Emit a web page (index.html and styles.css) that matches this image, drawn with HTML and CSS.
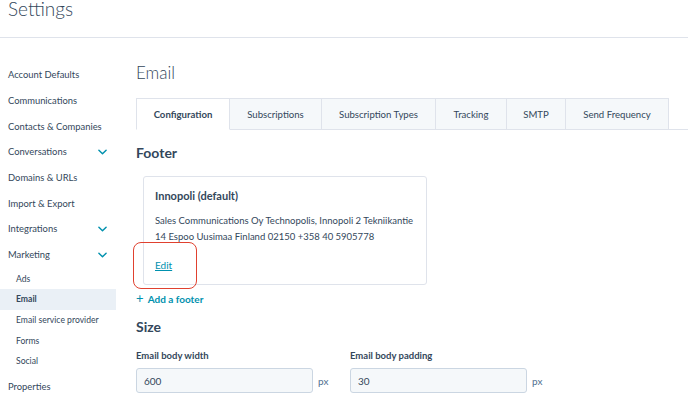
FILE: index.html
```html
<!DOCTYPE html>
<html lang="en">
<head>
  <meta charset="UTF-8">
  <title>Settings - Email</title>
  <link rel="stylesheet" href="styles.css">
</head>
<body>

  <header class="page-header">
    <h1 class="page-title">Settings</h1>
  </header>

  <div class="layout">

    <nav class="sidebar">
      <a class="nav-item">Account Defaults</a>
      <a class="nav-item">Communications</a>
      <a class="nav-item">Contacts &amp; Companies</a>
      <a class="nav-item">Conversations <svg class="chevron" viewBox="0 0 10 6"><path d="M1 1l4 4 4-4"/></svg></a>
      <a class="nav-item">Domains &amp; URLs</a>
      <a class="nav-item">Import &amp; Export</a>
      <a class="nav-item">Integrations <svg class="chevron" viewBox="0 0 10 6"><path d="M1 1l4 4 4-4"/></svg></a>
      <a class="nav-item">Marketing <svg class="chevron" viewBox="0 0 10 6"><path d="M1 1l4 4 4-4"/></svg></a>
      <div class="subnav">
        <a class="sub-item">Ads</a>
        <a class="sub-item is-active">Email</a>
        <a class="sub-item">Email service provider</a>
        <a class="sub-item">Forms</a>
        <a class="sub-item">Social</a>
      </div>
      <a class="nav-item">Properties</a>
    </nav>

    <main class="content">
      <h2 class="content-title">Email</h2>

      <div class="tabs">
        <button type="button" class="tab is-active">Configuration</button>
        <button type="button" class="tab">Subscriptions</button>
        <button type="button" class="tab">Subscription Types</button>
        <button type="button" class="tab">Tracking</button>
        <button type="button" class="tab">SMTP</button>
        <button type="button" class="tab">Send Frequency</button>
      </div>

      <h3 class="section-title">Footer</h3>

      <div class="footer-card">
        <div class="footer-name">Innopoli (default)</div>
        <p class="footer-address">Sales Communications Oy Technopolis, Innopoli 2 Tekniikantie<br>14 Espoo Uusimaa Finland 02150 +358 40 5905778</p>
        <a class="edit-link">Edit</a>
        <span class="highlight"></span>
      </div>

      <a class="add-link"><span class="plus">+</span> Add a footer</a>

      <h3 class="section-title is-size">Size</h3>

      <div class="fields">
        <div class="field">
          <label class="field-label">Email body width</label>
          <div class="field-row">
            <input class="field-input" type="text" value="600">
            <span class="unit">px</span>
          </div>
        </div>
        <div class="field">
          <label class="field-label">Email body padding</label>
          <div class="field-row">
            <input class="field-input" type="text" value="30">
            <span class="unit">px</span>
          </div>
        </div>
      </div>
    </main>

  </div>

</body>
</html>
```

FILE: styles.css
```css
html, body {
  height: 100%;
}
body {
  margin: 0;
  font-family: "Lato", "Noto Sans", sans-serif;
  color: #33475b;
  background: #fff;
  overflow: hidden;
}

.page-header {
  height: 37px;
  border-bottom: 1px solid #dfe3eb;
}
.page-title {
  margin: 0;
  padding-left: 8px;
  font-size: 19px;
  font-weight: 300;
  line-height: 18px;
  color: #33475b;
}

.layout {
  display: flex;
}

/* sidebar */
.sidebar {
  width: 116px;
  flex: none;
  padding-top: 24px;
}
.nav-item {
  display: flex;
  align-items: center;
  justify-content: space-between;
  height: 25.7px;
  padding: 0 9px 0 8px;
  font-size: 9.4px;
  white-space: nowrap;
  color: #33475b;
}
.chevron {
  width: 9px;
  height: 6px;
  fill: none;
  stroke: #0091ae;
  stroke-width: 1.6;
  stroke-linecap: round;
  stroke-linejoin: round;
}
.subnav {
  padding-top: 1px;
  margin-bottom: 2px;
}
.sub-item {
  display: flex;
  align-items: center;
  height: 20.6px;
  padding-left: 16px;
  font-size: 8.6px;
  white-space: nowrap;
  color: #33475b;
}
.sub-item.is-active {
  background: #eaf0f6;
  font-weight: 700;
}

/* content */
.content {
  flex: 1;
  padding-left: 20px;
}
.content-title {
  margin: 25px 0 0;
  font-size: 17px;
  font-weight: 300;
  line-height: 20px;
}
.tabs {
  display: flex;
  margin-top: 15px;
  border-bottom: 1px solid #dfe3eb;
}
.tab {
  height: 32px;
  margin-bottom: -1px;
  padding: 0;
  border: 1px solid #dfe3eb;
  border-left: 0;
  background: #f5f8fa;
  font-family: inherit;
  font-size: 9.6px;
  white-space: nowrap;
  color: #33475b;
}
.tab:first-child {
  border-left: 1px solid #dfe3eb;
}
.tab.is-active {
  background: #fff;
  border-bottom-color: #fff;
  font-weight: 700;
}
.tab:nth-child(1) { width: 94px; }
.tab:nth-child(2) { width: 92px; }
.tab:nth-child(3) { width: 114px; }
.tab:nth-child(4) { width: 71px; }
.tab:nth-child(5) { width: 59px; }
.tab:nth-child(6) { width: 103px; }

.section-title {
  margin: 14px 0 0;
  font-size: 14px;
  font-weight: 700;
  line-height: 18px;
}
.section-title.is-size {
  margin-top: 11px;
}

.footer-card {
  position: relative;
  width: 260px;
  margin: 14px 0 0 7px;
  padding: 11px 11px 11px;
  border: 1px solid #dfe3eb;
  border-radius: 3px;
}
.footer-name {
  font-size: 11px;
  font-weight: 700;
  line-height: 16px;
}
.footer-address {
  margin: 9px 0 0;
  font-size: 9.5px;
  line-height: 16px;
  white-space: nowrap;
}
.edit-link {
  display: inline-block;
  margin-top: 12px;
  font-size: 10px;
  line-height: 16px;
  color: #0091ae;
  text-decoration: underline;
}
.highlight {
  position: absolute;
  left: -11px;
  top: 65px;
  width: 62px;
  height: 45px;
  border: 1.5px solid #e0412f;
  border-radius: 8px;
}

.add-link {
  display: block;
  margin-top: 5px;
  font-size: 10px;
  font-weight: 700;
  line-height: 16px;
  color: #0091ae;
}
.plus {
  font-weight: 400;
  font-size: 13px;
  margin-right: 2px;
}

.fields {
  display: flex;
  margin-top: 13px;
}
.field {
  width: 214px;
}
.field-label {
  display: block;
  font-size: 9.5px;
  font-weight: 700;
  line-height: 14px;
}
.field-row {
  display: flex;
  align-items: center;
  margin-top: 5px;
}
.field-input {
  box-sizing: border-box;
  width: 177px;
  height: 25px;
  padding: 0 7px;
  border: 1px solid #cbd6e2;
  border-radius: 3px;
  background: #f5f8fa;
  font-family: inherit;
  font-size: 10px;
  color: #33475b;
}
.unit {
  margin-left: 5px;
  font-size: 10px;
  color: #516f90;
}
```
